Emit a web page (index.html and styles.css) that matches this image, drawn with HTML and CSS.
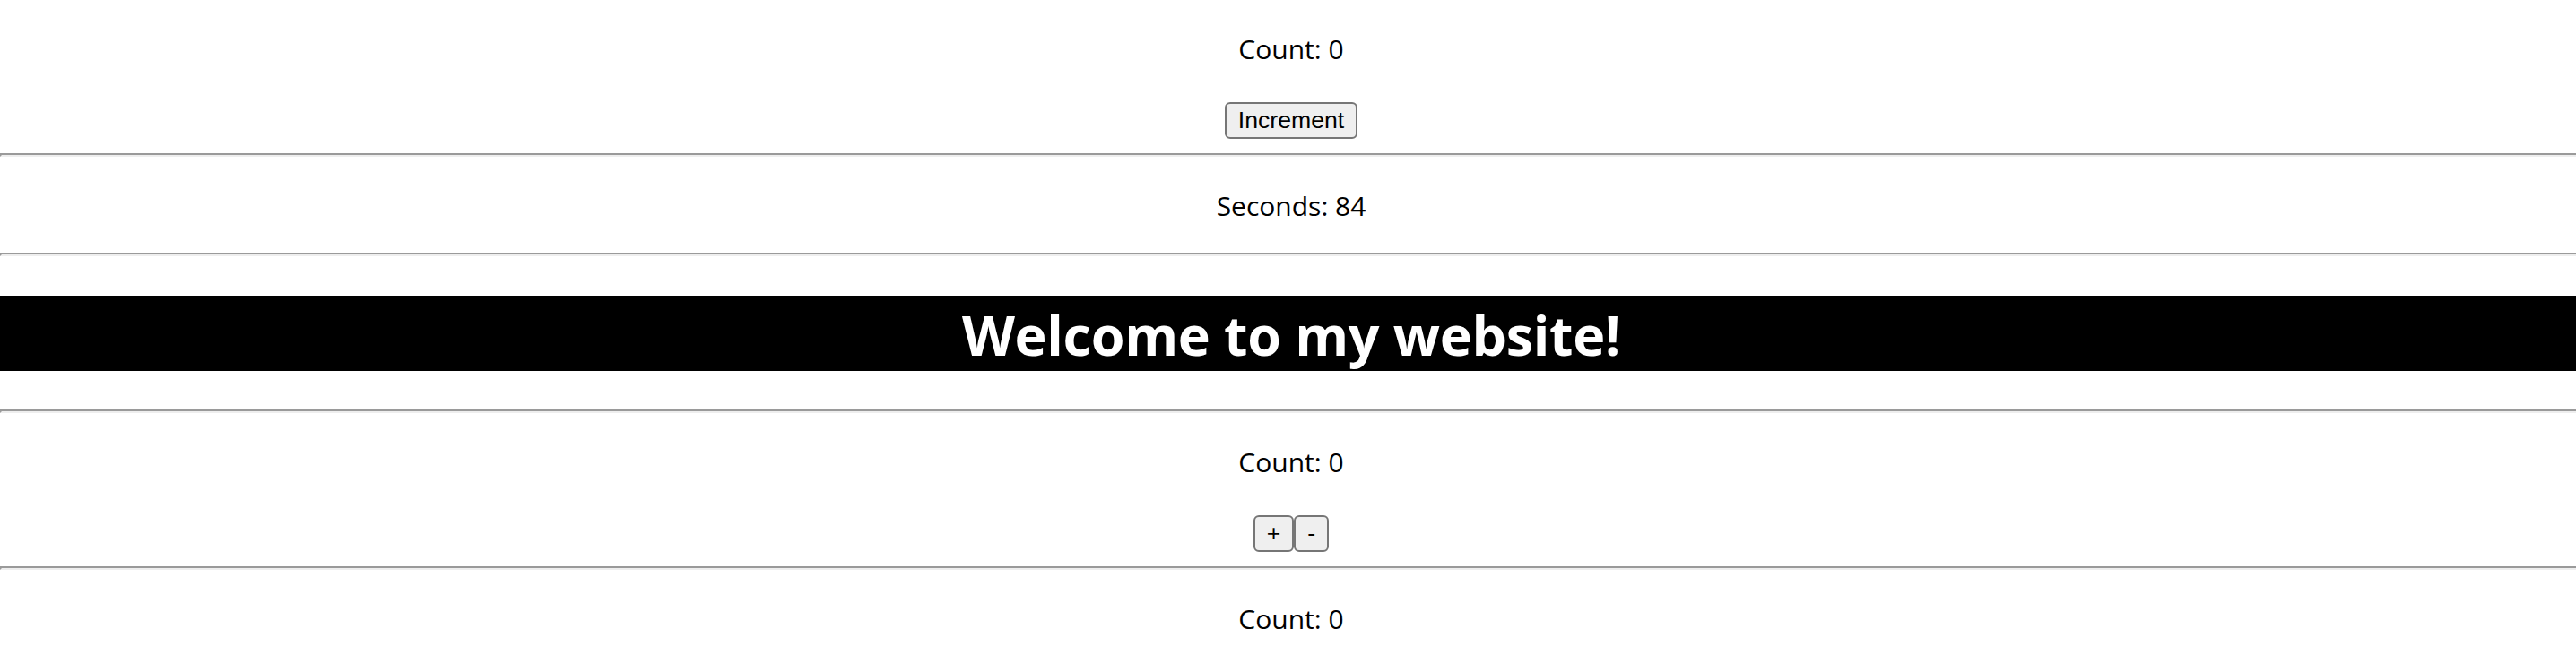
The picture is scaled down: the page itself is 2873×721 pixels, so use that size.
FILE: index.html
```html
<!DOCTYPE html>
<html>
<head>
<meta charset="utf-8">
<link rel="stylesheet" href="styles.css">
</head>
<body>
<div class="app">
  <section class="counter">
    <p class="label">Count: 0</p>
    <div class="row"><button class="btn">Increment</button></div>
  </section>
  <hr class="rule">
  <section class="timer">
    <p class="label">Seconds: 84</p>
  </section>
  <hr class="rule">
  <h1 class="banner">Welcome to my website!</h1>
  <hr class="rule">
  <section class="counter">
    <p class="label">Count: 0</p>
    <div class="row"><button class="btn">+</button><button class="btn">-</button></div>
  </section>
  <hr class="rule">
  <section class="counter">
    <p class="label">Count: 0</p>
  </section>
</div>
</body>
</html>
```
FILE: styles.css
```css
html, body {
  margin: 0;
  padding: 0;
  background: #ffffff;
  overflow: hidden;
}

.app {
  width: 2880px;
  font-family: "Open Sans", "Noto Sans", sans-serif;
  color: #000000;
  text-align: center;
}

.label {
  margin: 32px 0;
  padding-top: 3px;
  font-size: 30px;
  line-height: 40.2px;
}

.row {
  display: flex;
  justify-content: center;
  align-items: flex-start;
  height: 48px;
  padding-top: 6.5px;
  box-sizing: border-box;
}

.btn {
  font-family: "Liberation Sans", Arial, sans-serif;
  font-size: 26.67px;
  height: 41px;
  line-height: 33px;
  padding: 0 13px;
  margin: 0;
  box-sizing: border-box;
  background: #efefef;
  color: #000000;
  border: 2px solid #767676;
  border-radius: 6px;
}

.rule {
  margin: 16px 0;
  height: 0;
  border-style: solid;
  border-width: 2px;
  border-color: #9a9a9a #eeeeee #eeeeee #9a9a9a;
}

.banner {
  margin: 43.5px 0 43px;
  padding-top: 3px;
  box-sizing: border-box;
  background: #000000;
  color: #ffffff;
  font-size: 61px;
  font-weight: 700;
  line-height: 81px;
  height: 84px;
  letter-spacing: -0.3px;
}
```
